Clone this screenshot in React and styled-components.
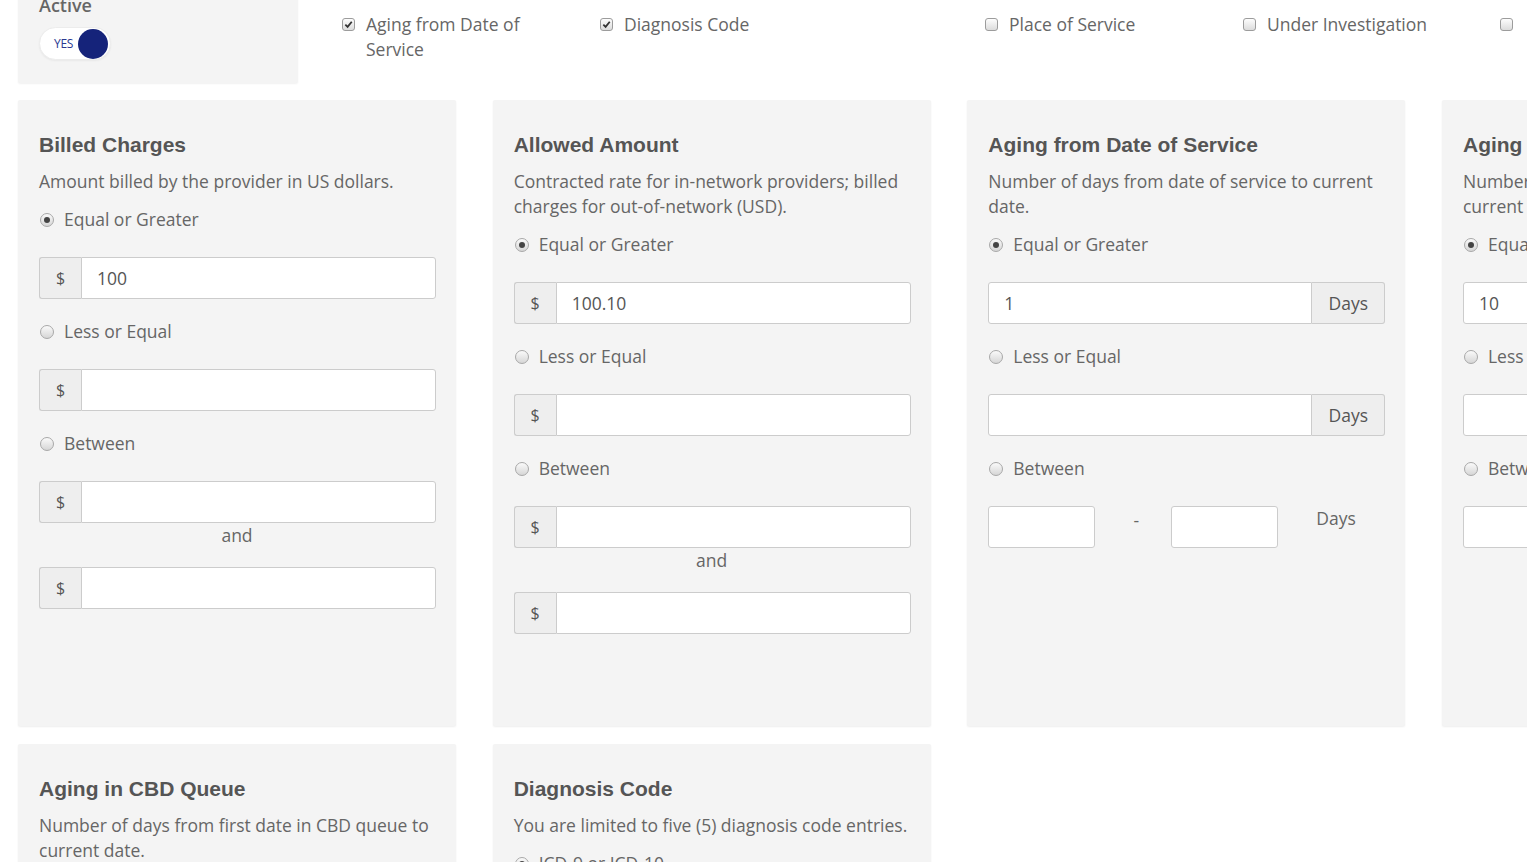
import React from "react";
import styled, { createGlobalStyle } from "styled-components";

const Global = createGlobalStyle`
  html, body { margin: 0; padding: 0; background: #fff; overflow: hidden; }
  body { font-family: "Open Sans", "Liberation Sans", sans-serif; color: #666; }
  * { box-sizing: border-box; }
`;

const Page = styled.div`
  margin-top: -22px;
  padding: 0 0 40px 18px;
  width: 2000px;
`;

const TopRow = styled.div`
  display: flex;
  align-items: flex-start;
  margin-bottom: 17px;
`;

const ActiveBox = styled.div`
  width: 280px;
  background: #f4f4f4;
  border-radius: 2px;
  box-shadow: 0 1px 2px rgba(0, 0, 0, 0.06);
  padding: 15px 21px 23px;
`;

const ActiveLabel = styled.div`
  font-size: 18px;
  font-weight: 600;
  line-height: 25px;
  color: #666;
`;

const Toggle = styled.div`
  margin-top: 9px;
  width: 72px;
  height: 33px;
  border-radius: 17px;
  background: #fff;
  border: 1px solid #ececec;
  box-shadow: 0 1px 2px rgba(0, 0, 0, 0.05);
  display: flex;
  align-items: center;
  justify-content: space-between;
  padding: 0 2px 0 14px;
`;

const ToggleText = styled.span`
  font-size: 12px;
  color: #2a3890;
  letter-spacing: -0.3px;
`;

const Knob = styled.span`
  width: 30px;
  height: 30px;
  border-radius: 50%;
  background: #15237a;
`;

const Checks = styled.div`
  display: grid;
  grid-template-columns: 258px 385px 258px 257px 258px;
  margin-left: 44px;
  padding-top: 34px;
`;

const CheckItem = styled.label`
  display: flex;
  align-items: flex-start;
  gap: 11px;
  font-size: 17.5px;
  line-height: 25px;
  color: #666;
  padding-right: 60px;
`;

const Box = styled.span`
  flex: none;
  margin-top: 6px;
  width: 13px;
  height: 13px;
  border-radius: 3px;
  border: 1px solid #9c9c9c;
  background: linear-gradient(#fdfdfd, #dcdcdc);
  display: flex;
  align-items: center;
  justify-content: center;
`;

const Cards = styled.div`
  display: grid;
  grid-template-columns: repeat(4, 438px);
  column-gap: 36.67px;
  row-gap: 18px;
`;

const Card = styled.div`
  background: #f4f4f4;
  border-radius: 2px;
  box-shadow: 0 1px 2px rgba(0, 0, 0, 0.07);
  padding: 32px 21px 30px;
  min-height: 626px;
`;

const Title = styled.h3`
  margin: 0 0 12px;
  font-family: "Liberation Sans", Arial, sans-serif;
  font-weight: 700;
  font-size: 21px;
  line-height: 25px;
  color: #555;
`;

const Desc = styled.p`
  margin: 0 0 13px;
  font-size: 17.5px;
  line-height: 25px;
  color: #666;
`;

const Option = styled.div`
  & + & { margin-top: 20px; }
`;

const RadioRow = styled.label`
  display: flex;
  align-items: center;
  gap: 10px;
  font-size: 17.5px;
  line-height: 25px;
  color: #666;
  padding-left: 1px;
`;

const Radio = styled.span`
  flex: none;
  width: 14px;
  height: 14px;
  border-radius: 50%;
  border: 1px solid #a8a8a8;
  background: linear-gradient(#fafafa, #d6d6d6);
  display: flex;
  align-items: center;
  justify-content: center;
  &::after {
    content: "";
    width: 6px;
    height: 6px;
    border-radius: 50%;
    background: ${(p) => (p.$checked ? "#444" : "transparent")};
  }
`;

const Group = styled.div`
  margin-top: ${(p) => p.$mt ?? 25}px;
  display: flex;
  height: 42px;
  width: 397px;
`;

const Addon = styled.span`
  flex: none;
  width: ${(p) => p.$w}px;
  display: flex;
  align-items: center;
  justify-content: center;
  background: #eee;
  border: 1px solid #ccc;
  border-radius: ${(p) => (p.$right ? "0 3px 3px 0" : "3px 0 0 3px")};
  ${(p) => (p.$right ? "border-left: none;" : "border-right: none;")}
  font-size: ${(p) => (p.$small ? 16 : 17.5)}px;
  color: #555;
`;

const Input = styled.div`
  flex: 1;
  min-width: 0;
  background: #fff;
  border: 1px solid #ccc;
  border-radius: ${(p) => p.$radius};
  display: flex;
  align-items: center;
  padding-left: 15px;
  font-size: 17.5px;
  color: #555;
`;

const And = styled.div`
  text-align: center;
  font-size: 17.5px;
  line-height: 25px;
  color: #666;
  margin-bottom: 19px;
`;

const RangeRow = styled.div`
  margin-top: 25px;
  display: grid;
  grid-template-columns: 107px 76px 107px 1fr;
  height: 42px;
`;

const SmallInput = styled.div`
  background: #fff;
  border: 1px solid #ccc;
  border-radius: 3px;
`;

const Dash = styled.span`
  text-align: center;
  font-size: 17.5px;
  line-height: 25px;
  padding: 2px 0 0 6px;
  color: #666;
`;

const DaysText = styled.span`
  font-size: 17.5px;
  line-height: 25px;
  padding: 0 0 0 38px;
  color: #666;
`;

const Check = () => (
  <svg width="9" height="9" viewBox="0 0 10 10">
    <path d="M1.5 5.2 L4 7.6 L8.6 2" fill="none" stroke="#333" strokeWidth="2" />
  </svg>
);

const CheckOpt = ({ checked, children }) => (
  <CheckItem>
    <Box>{checked && <Check />}</Box>
    <span>{children}</span>
  </CheckItem>
);

const Dollar = ({ value }) => (
  <Group>
    <Addon $w={42} $small>$</Addon>
    <Input $radius="0 3px 3px 0">{value}</Input>
  </Group>
);

const DaysField = ({ value }) => (
  <Group>
    <Input $radius="3px 0 0 3px">{value}</Input>
    <Addon $w={73} $right>Days</Addon>
  </Group>
);

const MoneyCard = ({ title, desc, value }) => (
  <Card>
    <Title>{title}</Title>
    <Desc>{desc}</Desc>
    <Option>
      <RadioRow><Radio $checked />Equal or Greater</RadioRow>
      <Dollar value={value} />
    </Option>
    <Option>
      <RadioRow><Radio />Less or Equal</RadioRow>
      <Dollar />
    </Option>
    <Option>
      <RadioRow><Radio />Between</RadioRow>
      <Dollar />
      <And>and</And>
      <Group $mt={0}>
        <Addon $w={42} $small>$</Addon>
        <Input $radius="0 3px 3px 0" />
      </Group>
    </Option>
  </Card>
);

const DaysCard = ({ title, desc, value }) => (
  <Card>
    <Title>{title}</Title>
    <Desc>{desc}</Desc>
    <Option>
      <RadioRow><Radio $checked />Equal or Greater</RadioRow>
      <DaysField value={value} />
    </Option>
    <Option>
      <RadioRow><Radio />Less or Equal</RadioRow>
      <DaysField />
    </Option>
    <Option>
      <RadioRow><Radio />Between</RadioRow>
      <RangeRow>
        <SmallInput />
        <Dash>-</Dash>
        <SmallInput />
        <DaysText>Days</DaysText>
      </RangeRow>
    </Option>
  </Card>
);

export default function App() {
  return (
    <>
      <Global />
      <Page>
        <TopRow>
          <ActiveBox>
            <ActiveLabel>Active</ActiveLabel>
            <Toggle>
              <ToggleText>YES</ToggleText>
              <Knob />
            </Toggle>
          </ActiveBox>
          <Checks>
            <CheckOpt checked>Aging from Date of Service</CheckOpt>
            <CheckOpt checked>Diagnosis Code</CheckOpt>
            <CheckOpt>Place of Service</CheckOpt>
            <CheckOpt>Under Investigation</CheckOpt>
            <CheckOpt>&nbsp;Aging in CBD Queue</CheckOpt>
          </Checks>
        </TopRow>
        <Cards>
          <MoneyCard
            title="Billed Charges"
            desc="Amount billed by the provider in US dollars."
            value="100"
          />
          <MoneyCard
            title="Allowed Amount"
            desc="Contracted rate for in-network providers; billed charges for out-of-network (USD)."
            value="100.10"
          />
          <DaysCard
            title="Aging from Date of Service"
            desc="Number of days from date of service to current date."
            value="1"
          />
          <DaysCard
            title="Aging from Date of Receipt"
            desc="Number of days from date of payer receipt to current date."
            value="10"
          />
          <Card>
            <Title>Aging in CBD Queue</Title>
            <Desc>Number of days from first date in CBD queue to current date.</Desc>
            <Option>
              <RadioRow><Radio $checked />Equal or Greater</RadioRow>
              <DaysField />
            </Option>
          </Card>
          <Card>
            <Title>Diagnosis Code</Title>
            <Desc>You are limited to five (5) diagnosis code entries.</Desc>
            <Option>
              <RadioRow><Radio $checked />ICD-9 or ICD-10</RadioRow>
            </Option>
          </Card>
        </Cards>
      </Page>
    </>
  );
}
